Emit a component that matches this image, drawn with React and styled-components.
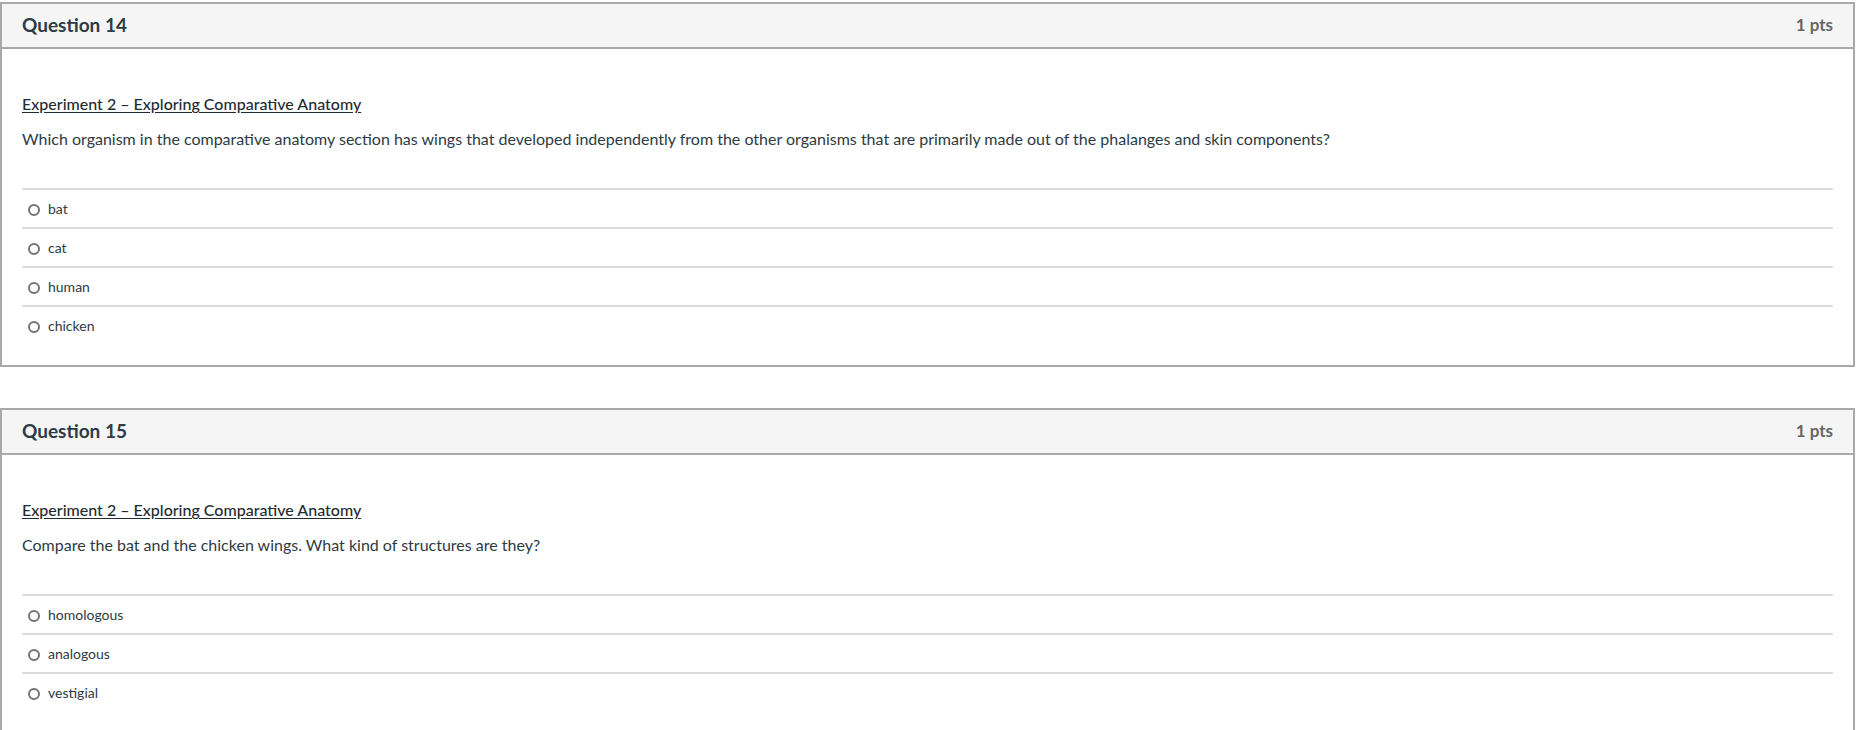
import React from "react";
import styled, { createGlobalStyle } from "styled-components";

const Global = createGlobalStyle`
  html, body { margin: 0; padding: 0; background: #fff; }
  body { font-family: Lato, "Open Sans", "Liberation Sans", sans-serif; color: #2d3b45; }
`;

const Page = styled.div`
  padding-top: 2px;
  display: flex;
  flex-direction: column;
  gap: 41px;
  width: 1855px;
`;

const Card = styled.section`
  border: 2px solid #a9a9a9;
  background: #fff;
`;

const Header = styled.header`
  display: flex;
  justify-content: space-between;
  align-items: center;
  height: 45px;
  padding: 0 20px 2px;
  box-sizing: border-box;
  background: #f5f5f5;
  border-bottom: 2px solid #a9a9a9;
`;

const Title = styled.h2`
  margin: 0;
  font-size: 19px;
  font-weight: 700;
  color: #2d3b45;
`;

const Points = styled.span`
  font-size: 17px;
  font-weight: 700;
  color: #666;
`;

const Body = styled.div`
  padding: 43px 20px 21px;
`;

const Heading = styled.p`
  margin: 0 0 11px;
  font-size: 16px;
  line-height: 24px;
  text-decoration: underline;
  text-underline-offset: 2px;
  color: #1f2b33;
  font-weight: 500;
`;

const Text = styled.p`
  margin: 0 0 37px;
  font-size: 16px;
  line-height: 24px;
  color: #2d3b45;
`;

const Answers = styled.div`
  display: flex;
  flex-direction: column;
`;

const Answer = styled.label`
  display: flex;
  align-items: center;
  gap: 8px;
  height: 37px;
  padding-left: 6px;
  border-top: 2px solid #dcdcdc;
  font-size: 14px;
  color: #2d3b45;
`;

const Radio = styled.span`
  box-sizing: border-box;
  width: 12px;
  height: 12px;
  margin-top: 3px;
  border-radius: 50%;
  border: 2px solid #737373;
  flex: none;
`;

const questions = [
  {
    n: 14,
    text:
      "Which organism in the comparative anatomy section has wings that developed independently from the other organisms that are primarily made out of the phalanges and skin components?",
    answers: ["bat", "cat", "human", "chicken"],
  },
  {
    n: 15,
    text: "Compare the bat and the chicken wings. What kind of structures are they?",
    answers: ["homologous", "analogous", "vestigial"],
  },
];

export default function App() {
  return (
    <>
      <Global />
      <Page>
        {questions.map((q) => (
          <Card key={q.n}>
            <Header>
              <Title>Question {q.n}</Title>
              <Points>1 pts</Points>
            </Header>
            <Body>
              <Heading>Experiment 2 – Exploring Comparative Anatomy</Heading>
              <Text>{q.text}</Text>
              <Answers>
                {q.answers.map((a) => (
                  <Answer key={a}>
                    <Radio />
                    {a}
                  </Answer>
                ))}
              </Answers>
            </Body>
          </Card>
        ))}
      </Page>
    </>
  );
}
